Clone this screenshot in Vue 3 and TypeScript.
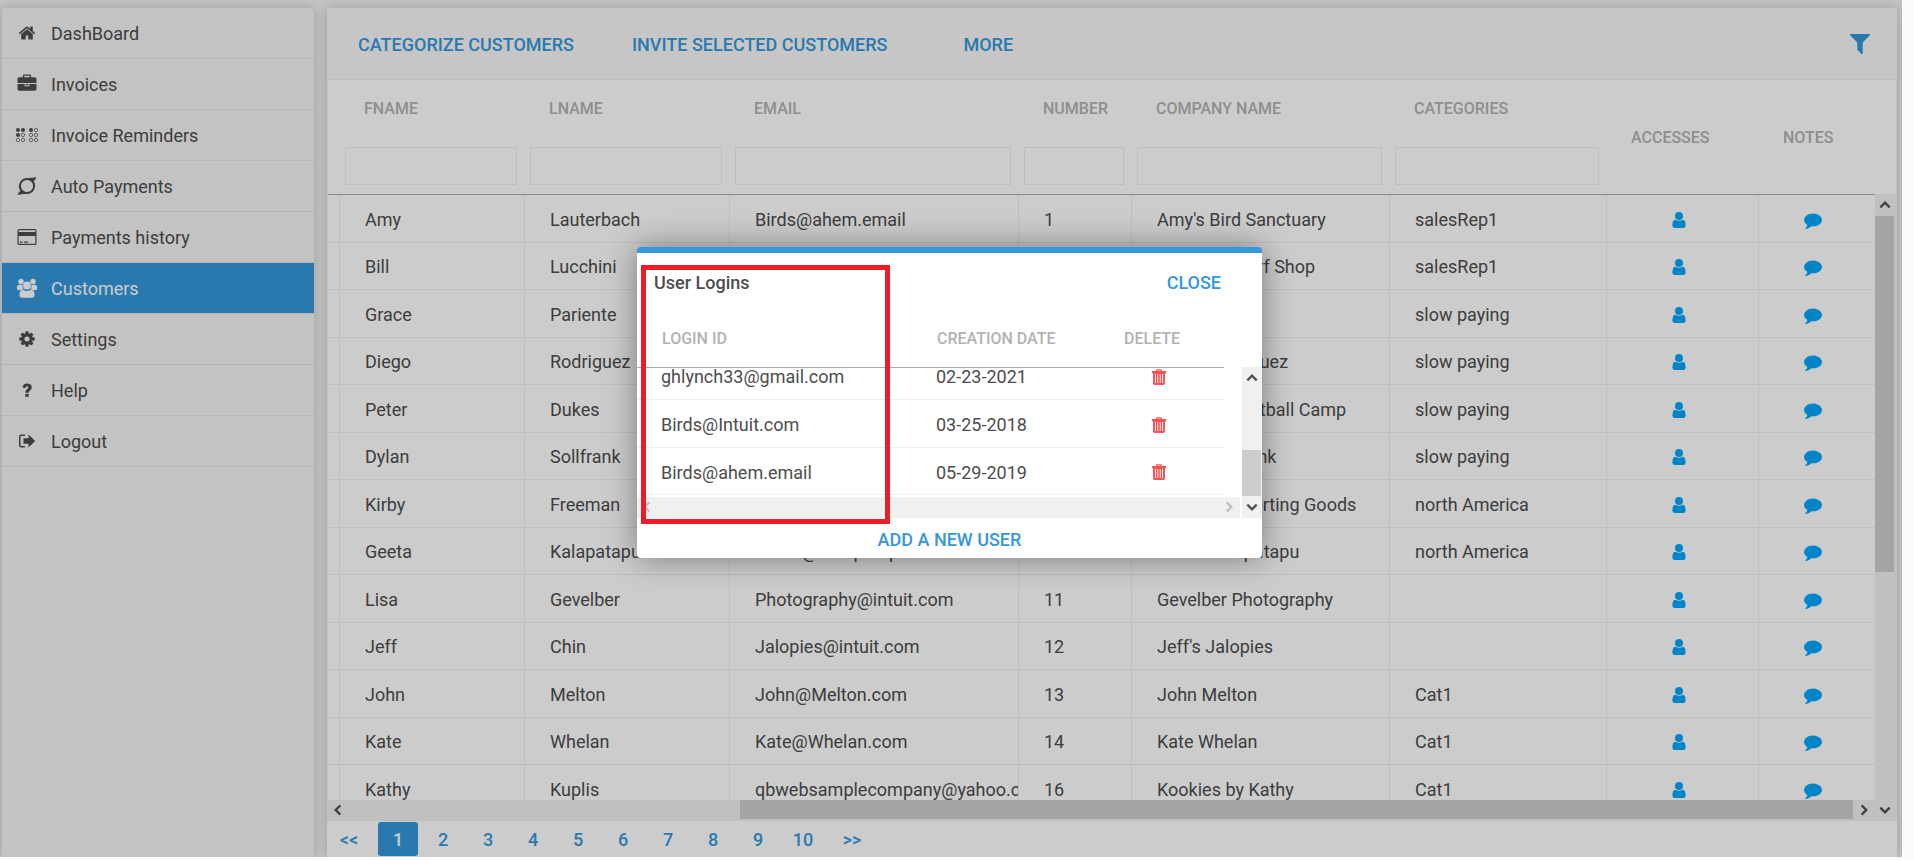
<script setup lang="ts">
import { onMounted, ref } from 'vue'

interface Customer {
  first: string
  last: string
  email: string
  number: string
  company: string
  category: string
}

const menu = [
  { icon: 'home', label: 'DashBoard' },
  { icon: 'briefcase', label: 'Invoices' },
  { icon: 'braille', label: 'Invoice Reminders' },
  { icon: 'cycle', label: 'Auto Payments' },
  { icon: 'card', label: 'Payments history' },
  { icon: 'group', label: 'Customers' },
  { icon: 'cog', label: 'Settings' },
  { icon: 'question', label: 'Help' },
  { icon: 'logout', label: 'Logout' },
]

const activeItem = ref('Customers')
const filterColumns = ['FNAME', 'LNAME', 'EMAIL', 'NUMBER', 'COMPANY NAME', 'CATEGORIES']

const customers: Customer[] = [
  { first: 'Amy', last: 'Lauterbach', email: 'Birds@ahem.email', number: '1', company: "Amy's Bird Sanctuary", category: 'salesRep1' },
  { first: 'Bill', last: 'Lucchini', email: 'Surf@Intuit.com', number: '2', company: "Bill's Windsurf Shop", category: 'salesRep1' },
  { first: 'Grace', last: 'Pariente', email: '', number: '3', company: '', category: 'slow paying' },
  { first: 'Diego', last: 'Rodriguez', email: 'Diego@Rodriguez.com', number: '4', company: 'Diego Rodriguez', category: 'slow paying' },
  { first: 'Peter', last: 'Dukes', email: 'Dukes_bball@intuit.com', number: '5', company: 'Dukes Basketball Camp', category: 'slow paying' },
  { first: 'Dylan', last: 'Sollfrank', email: '', number: '6', company: 'Dylan Sollfrank', category: 'slow paying' },
  { first: 'Kirby', last: 'Freeman', email: 'Sporting_goods@intuit.com', number: '8', company: 'Freeman Sporting Goods', category: 'north America' },
  { first: 'Geeta', last: 'Kalapatapu', email: 'Geeta@Kalapatapu.com', number: '10', company: 'Geeta Kalapatapu', category: 'north America' },
  { first: 'Lisa', last: 'Gevelber', email: 'Photography@intuit.com', number: '11', company: 'Gevelber Photography', category: '' },
  { first: 'Jeff', last: 'Chin', email: 'Jalopies@intuit.com', number: '12', company: "Jeff's Jalopies", category: '' },
  { first: 'John', last: 'Melton', email: 'John@Melton.com', number: '13', company: 'John Melton', category: 'Cat1' },
  { first: 'Kate', last: 'Whelan', email: 'Kate@Whelan.com', number: '14', company: 'Kate Whelan', category: 'Cat1' },
  { first: 'Kathy', last: 'Kuplis', email: 'qbwebsamplecompany@yahoo.com', number: '16', company: 'Kookies by Kathy', category: 'Cat1' },
]

const pages = ['<<', '1', '2', '3', '4', '5', '6', '7', '8', '9', '10', '>>']
const currentPage = ref('1')

const logins = [
  { id: 'ghlynch33@gmail.com', created: '02-23-2021' },
  { id: 'Birds@Intuit.com', created: '03-25-2018' },
  { id: 'Birds@ahem.email', created: '05-29-2019' },
]

const loginList = ref<HTMLElement | null>(null)

onMounted(() => {
  if (loginList.value) loginList.value.scrollTop = loginList.value.scrollHeight
})
</script>

<template>
  <div class="app">
    <svg class="sprite" aria-hidden="true">
      <symbol id="home" viewBox="0 0 1792 1792">
        <path d="M1472 992v480q0 26-19 45t-45 19h-384v-384h-256v384h-384q-26 0-45-19t-19-45v-480q0-1 .5-3t.5-3l575-474 575 474q1 2 1 6zm223-69l-62 74q-8 9-21 11h-3q-13 0-21-7l-692-577-692 577q-12 8-24 7-13-2-21-11l-62-74q-8-10-7-23.5t11-21.5l719-599q32-26 76-26t76 26l244 204v-195q0-14 9-23t23-9h192q14 0 23 9t9 23v408l219 182q10 8 11 21.5t-7 23.5z" />
      </symbol>
      <symbol id="briefcase" viewBox="-48 -48 1888 1888">
        <path d="M640 256h512v-128h-512v128zm1152 640v480q0 66-47 113t-113 47h-1472q-66 0-113-47t-47-113v-480h672v160q0 26 19 45t45 19h320q26 0 45-19t19-45v-160h672zm-768 0v128h-256v-128h256zm768-480v384h-1792v-384q0-66 47-113t113-47h352v-160q0-40 28-68t68-28h576q40 0 68 28t28 68v160h352q66 0 113 47t47 113z" />
      </symbol>
      <symbol id="braille" viewBox="0 0 24 20">
        <circle cx="3" cy="5" r="2" /><circle cx="8" cy="5" r="2" /><circle cx="16" cy="5" r="2" /><circle cx="3" cy="10" r="2" />
        <g fill="none" stroke="currentColor" stroke-width="0.7">
          <circle cx="21" cy="5" r="1.7" /><circle cx="8" cy="10" r="1.7" /><circle cx="16" cy="10" r="1.7" /><circle cx="21" cy="10" r="1.7" />
          <circle cx="3" cy="15" r="1.7" /><circle cx="8" cy="15" r="1.7" /><circle cx="16" cy="15" r="1.7" /><circle cx="21" cy="15" r="1.7" />
        </g>
      </symbol>
      <symbol id="cycle" viewBox="0 0 20 20">
        <path fill-rule="evenodd" d="M19.5 1Q18.500 4 16.600 5A8.300 8.300 0 0 1 10 18Q5 17.700 .5 19Q1.500 16 3.400 15A8.300 8.300 0 0 1 10 2Q15 2.300 19.500 1ZM10 3.900A6.100 6.100 0 1 0 10 16.100A6.100 6.100 0 1 0 10 3.900Z" />
      </symbol>
      <symbol id="card" viewBox="0 0 20 20">
        <path fill-rule="evenodd" d="M2 2H18Q19.500 2 19.500 3.500V17Q19.500 18 18 18H2Q.5 18 .5 17V3.500Q.5 2 2 2ZM1.700 3.200V5H18.300V3.200ZM1.700 9V16.800H18.300V9ZM3 14.500H5.500V15.700H3ZM7 14.500H11V15.700H7Z" />
      </symbol>
      <symbol id="group" viewBox="0 0 22 20">
        <circle cx="5" cy="3.500" r="2.700" /><circle cx="17" cy="3.500" r="2.700" />
        <path d="M3.500 6.500Q5.500 7.500 6.500 6.500Q6 9.500 7.500 11.300Q6 11.500 5 12.300H3Q.8 12.300.8 10Q.8 7 3.500 6.500ZM18.500 6.500Q16.500 7.500 15.500 6.500Q16 9.500 14.500 11.300Q16 11.500 17 12.300H19Q21.200 12.300 21.200 10Q21.200 7 18.500 6.500Z" />
        <circle cx="11" cy="7.500" r="3.900" />
        <path d="M7 11.700Q11 14.500 15 11.700Q18.500 12 18.500 17Q18.500 19.700 16 19.700H6Q3.500 19.700 3.500 17Q3.500 12 7 11.700Z" />
      </symbol>
      <symbol id="cog" viewBox="0 0 1792 1792">
        <path d="M1152 896q0-106-75-181t-181-75-181 75-75 181 75 181 181 75 181-75 75-181zm512-109v222q0 12-8 23t-20 13l-185 28q-19 54-39 91 35 50 107 138 10 12 10 25t-9 23q-27 37-99 108t-94 71q-12 0-26-9l-138-108q-44 23-91 38-16 136-29 186-7 28-36 28h-222q-14 0-24.500-8.500t-11.500-21.500l-28-184q-49-16-90-37l-141 107q-10 9-25 9-14 0-25-11-126-114-165-168-7-10-7-23 0-12 8-23 15-21 51-66.500t54-70.500q-27-50-41-99l-183-27q-13-2-21-12.500t-8-23.500v-222q0-12 8-23t19-13l186-28q14-46 39-92-40-57-107-138-10-12-10-24 0-10 9-23 26-36 98.500-107.500t94.500-71.500q13 0 26 10l138 107q44-23 91-38 16-136 29-186 7-28 36-28h222q14 0 24.500 8.500t11.500 21.500l28 184q49 16 90 37l142-107q9-9 24-9 13 0 25 10 129 119 165 170 7 8 7 22 0 12-8 23-15 21-51 66.500t-54 70.500q26 50 41 98l183 28q13 2 21 12.500t8 23.500z" />
      </symbol>
      <symbol id="question" viewBox="0 0 20 20">
        <path d="M5.500 7.500Q6 3.500 10 3.500Q14.800 3.500 14.800 7.500Q14.800 9.300 12.800 10.700Q11.700 11.500 11.700 12.800H8.300Q8.200 10.600 10 9.300Q11.400 8.300 11.300 7.600Q11.200 6.200 10 6.200Q8.700 6.200 8.300 8.300Z" />
        <rect x="8.300" y="13.800" width="3.400" height="3" />
      </symbol>
      <symbol id="logout" viewBox="0 0 20 20">
        <path d="M8 3.500V5H4.500Q3.500 5 3.500 6V14Q3.500 15 4.500 15H8V16.500H4.500Q2 16.500 2 14V6Q2 3.500 4.500 3.500Z" />
        <path d="M6.500 7.300H11.500V3.500L18.200 10L11.500 16.500V12.700H6.500Z" />
      </symbol>
      <symbol id="filter" viewBox="192 256 1408 1408">
        <path d="M1595 295q17 41-14 70l-493 493v742q0 42-39 59-13 5-25 5-27 0-45-19l-256-256q-19-19-19-45v-486l-493-493q-31-29-14-70 17-39 59-39h1280q42 0 59 39z" />
      </symbol>
      <symbol id="person" viewBox="0 0 14 16">
        <circle cx="7" cy="4" r="4" />
        <path d="M3 7.700Q7 10 11 7.700Q13.600 8.200 13.600 13.600Q13.600 16 11.600 16H2.400Q.4 16 .4 13.600Q.4 8.200 3 7.700Z" />
      </symbol>
      <symbol id="comment" viewBox="0 200 1792 1600">
        <path d="M1792 896q0 174-120 321.500t-326 233-450 85.500q-70 0-145-8-198 175-460 242-49 14-114 22-17 2-30.500-9t-17.500-29v-1q-3-4-.5-12t2-10 4.500-9.500l6-9 7-8.500 8-9q7-8 31-34.500t34.500-38 31-39.500 32.500-51 27-59 26-76q-157-89-247.500-220t-90.500-281q0-130 71-248.500t191-204.500 286-136.500 348-50.500q244 0 450 85.500t326 233 120 321.500z" />
      </symbol>
      <symbol id="trash" viewBox="0 0 14 16">
        <path fill-rule="evenodd" d="M4 2V1.500Q4 .3 5.200 .3H8.800Q10 .3 10 1.500V2H14V4.200H13V14.300Q13 16 11.300 16H2.700Q1 16 1 14.300V4.200H0V2ZM5.400 2H8.600V1.400H5.400ZM3 5V14H3.900V5ZM5.300 5V14H6.200V5ZM7.800 5V14H8.700V5ZM10.100 5V14H11V5Z" />
      </symbol>
      <symbol id="arrow-up" viewBox="0 0 12 12"><path class="chev" d="M2 8L6 4L10 8" /></symbol>
      <symbol id="arrow-down" viewBox="0 0 12 12"><path class="chev" d="M2 4L6 8L10 4" /></symbol>
      <symbol id="arrow-left" viewBox="0 0 12 12"><path class="chev" d="M8 2L4 6L8 10" /></symbol>
      <symbol id="arrow-right" viewBox="0 0 12 12"><path class="chev" d="M4 2L8 6L4 10" /></symbol>
    </svg>

    <div class="page">
      <nav class="sidebar">
        <a v-for="item in menu" :key="item.label" href="#" class="menu-item" :class="{ active: item.label === activeItem }" @click.prevent="activeItem = item.label">
          <svg class="menu-icon" :class="item.icon"><use :href="'#' + item.icon" /></svg>
          <span>{{ item.label }}</span>
        </a>
      </nav>

      <main class="panel">
        <div class="toolbar">
          <button type="button" class="link-button categorize">CATEGORIZE CUSTOMERS</button>
          <button type="button" class="link-button invite">INVITE SELECTED CUSTOMERS</button>
          <button type="button" class="link-button">MORE</button>
          <button type="button" class="filter-button" aria-label="Filter"><svg><use href="#filter" /></svg></button>
        </div>

        <div class="grid-area">
          <div class="list">
            <div class="viewport">
              <table class="customers">
                <colgroup>
                  <col class="c-edge" /><col class="c-first" /><col class="c-last" /><col class="c-email" /><col class="c-number" />
                  <col class="c-company" /><col class="c-category" /><col class="c-access" /><col class="c-notes" />
                </colgroup>
                <thead>
                  <tr>
                    <th class="edge"></th>
                    <th v-for="name in filterColumns" :key="name" class="filterable">
                      <label>
                        <span>{{ name }}</span>
                        <input type="text" />
                      </label>
                    </th>
                    <th class="plain">ACCESSES</th>
                    <th class="plain">NOTES</th>
                  </tr>
                </thead>
                <tbody>
                  <tr v-for="row in customers" :key="row.first">
                    <td class="edge"></td>
                    <td>{{ row.first }}</td>
                    <td>{{ row.last }}</td>
                    <td>{{ row.email }}</td>
                    <td>{{ row.number }}</td>
                    <td>{{ row.company }}</td>
                    <td>{{ row.category }}</td>
                    <td class="icon-cell">
                      <button type="button" class="icon-button" :aria-label="'Accesses of ' + row.first"><svg class="person"><use href="#person" /></svg></button>
                    </td>
                    <td class="icon-cell">
                      <button type="button" class="icon-button" :aria-label="'Notes of ' + row.first"><svg class="comment"><use href="#comment" /></svg></button>
                    </td>
                  </tr>
                </tbody>
              </table>
            </div>
            <div class="h-bar">
              <svg class="arrow"><use href="#arrow-left" /></svg>
              <div class="h-track"><div class="h-thumb"></div></div>
              <svg class="arrow"><use href="#arrow-right" /></svg>
            </div>
          </div>
          <div class="v-bar">
            <svg class="arrow"><use href="#arrow-up" /></svg>
            <div class="v-track"><div class="v-thumb"></div></div>
            <svg class="arrow"><use href="#arrow-down" /></svg>
          </div>
        </div>

        <div class="pager">
          <button v-for="p in pages" :key="p" type="button" :class="{ current: p === currentPage }" @click="currentPage = p">{{ p }}</button>
        </div>
      </main>

      <div class="overlay">
        <section class="dialog" role="dialog" aria-labelledby="dialog-title">
          <header class="dialog-head">
            <h2 id="dialog-title">User Logins</h2>
            <button type="button" class="link-button">CLOSE</button>
          </header>
          <div class="login-area">
            <div class="login-main">
              <div ref="loginList" class="login-list">
                <table class="logins">
                  <colgroup><col class="l-id" /><col class="l-date" /><col class="l-delete" /></colgroup>
                  <thead>
                    <tr><th>LOGIN ID</th><th>CREATION DATE</th><th>DELETE</th></tr>
                  </thead>
                  <tbody>
                    <tr v-for="login in logins" :key="login.id">
                      <td>{{ login.id }}</td>
                      <td>{{ login.created }}</td>
                      <td class="icon-cell">
                        <button type="button" class="icon-button" :aria-label="'Delete ' + login.id"><svg class="trash"><use href="#trash" /></svg></button>
                      </td>
                    </tr>
                  </tbody>
                </table>
              </div>
              <div class="h-bar inactive">
                <svg class="arrow"><use href="#arrow-left" /></svg>
                <svg class="arrow"><use href="#arrow-right" /></svg>
              </div>
            </div>
            <div class="v-bar small">
              <svg class="arrow"><use href="#arrow-up" /></svg>
              <div class="v-track"><div class="v-thumb"></div></div>
              <svg class="arrow"><use href="#arrow-down" /></svg>
            </div>
          </div>
          <footer class="dialog-foot">
            <button type="button" class="link-button">ADD A NEW USER</button>
          </footer>
          <div class="marker"></div>
        </section>
      </div>
    </div>
  </div>
</template>

<style>
body {
  margin: 0;
  background: #fcfcfc;
  overflow: hidden;
}
</style>

<style scoped>
.app {
  box-sizing: border-box;
  height: 100vh;
  padding: 0 12px 3px 0;
  font-family: Roboto, "Liberation Sans", sans-serif;
  font-size: 18px;
  line-height: 24px;
  color: #4d4d4d;
}
.sprite {
  position: absolute;
  width: 0;
  height: 0;
}
svg {
  display: block;
  fill: currentColor;
}
.chev {
  fill: none;
  stroke: currentColor;
  stroke-width: 2;
}
button {
  margin: 0;
  padding: 0;
  border: 0;
  background: none;
  font: inherit;
  color: inherit;
  cursor: pointer;
}
.page {
  position: relative;
  box-sizing: border-box;
  height: 100%;
  display: flex;
  gap: 13px;
  padding: 8px 5px 0 2px;
  background: #f4f4f4;
  overflow: hidden;
}
.sidebar {
  flex: none;
  width: 312px;
  border-radius: 3px 3px 0 0;
  background: #f4f4f4;
  box-shadow: 0 0 12px rgba(0, 0, 0, 0.2);
}
.menu-item {
  box-sizing: border-box;
  height: 51px;
  display: flex;
  align-items: center;
  gap: 12px;
  padding-left: 13px;
  border-bottom: 1px solid #e4e4e4;
  color: #4d4d4d;
  text-decoration: none;
}
.menu-item span {
  padding-top: 2px;
}
.menu-item.active {
  background: #3498db;
  color: #fff;
}
.menu-icon {
  width: 24px;
  height: 20px;
}
.menu-icon.home,
.menu-icon.cog {
  height: 18px;
}
.panel {
  flex: 1;
  min-width: 0;
  display: flex;
  flex-direction: column;
  border-radius: 3px 3px 0 0;
  background: #fff;
  box-shadow: 0 0 12px rgba(0, 0, 0, 0.2);
}
.toolbar {
  flex: none;
  box-sizing: border-box;
  height: 72px;
  display: flex;
  align-items: center;
  padding: 0 27px 0 31px;
  border-bottom: 1px solid #ebeef0;
  border-radius: 3px 3px 0 0;
  background: #f8f8f8;
}
.link-button {
  padding-top: 2px;
  font-weight: 500;
  color: #3498db;
}
.categorize {
  margin-right: 58px;
}
.invite {
  margin-right: 76px;
}
.filter-button {
  margin-left: auto;
  color: #3498db;
}
.filter-button svg {
  width: 20px;
  height: 20px;
}
.grid-area {
  flex: 1;
  min-height: 0;
  display: flex;
  border: 0 solid #ebf1f2;
  border-width: 0 1px;
}
.list {
  flex: 1;
  min-width: 0;
  display: flex;
  flex-direction: column;
}
.viewport {
  flex: 1;
  min-height: 0;
  overflow: hidden;
}
table {
  table-layout: fixed;
  border-spacing: 0;
}
.customers {
  width: 100%;
}
.c-edge { width: 11px; }
.c-first { width: 185px; }
.c-last { width: 205px; }
.c-email { width: 289px; }
.c-number { width: 113px; }
.c-company { width: 258px; }
.c-category { width: 217px; }
.c-access { width: 152px; }
.c-notes { width: 117px; }
th {
  box-sizing: border-box;
  border-bottom: 1px solid #acacac;
  font-size: 16px;
  font-weight: 500;
  text-align: left;
  color: #b2b2b2;
  background: #fff;
}
.customers th {
  height: 115px;
  padding: 0;
}
.filterable label {
  display: flex;
  flex-direction: column;
  gap: 26px;
  padding: 7px 7px 0 6px;
}
.filterable span {
  padding-left: 19px;
}
.filterable input {
  box-sizing: border-box;
  width: 100%;
  height: 38px;
  border: 1px solid #ebf1f2;
  background: none;
  font: inherit;
}
.customers th.plain {
  padding: 2px 0 0 25px;
}
td {
  box-sizing: border-box;
  height: 48px;
  padding: 2px 0 0 25px;
  border-bottom: 1px solid #ebf1f2;
  overflow: hidden;
  white-space: nowrap;
}
.customers td {
  border-left: 1px solid #ebf1f2;
}
.customers td.edge {
  padding: 0;
  border-left: 0;
}
.customers tr:nth-child(even) td {
  height: 47px;
}
td.icon-cell {
  padding: 2px 6px 0 0;
}
.customers td.icon-cell {
  padding: 2px 8px 0 0;
}
.customers td.icon-cell:last-child {
  padding: 4px 8px 0 0;
}
.icon-button {
  display: block;
  margin: 0 auto;
}
.person {
  width: 14px;
  height: 16px;
  color: #00a8fb;
}
.comment {
  width: 18px;
  height: 16px;
  color: #00a8fb;
}
.trash {
  width: 14px;
  height: 16px;
  color: #ff5252;
}
.arrow {
  flex: none;
  width: 14px;
  height: 14px;
  color: #505050;
}
.h-bar {
  flex: none;
  box-sizing: border-box;
  height: 21px;
  display: flex;
  align-items: center;
  gap: 4px;
  padding: 0 4px 2px 3px;
  background: #f0f0f0;
}
.h-track {
  flex: 1;
  height: 19px;
}
.h-thumb {
  width: 74%;
  height: 100%;
  margin-left: auto;
  background: #cdcdcd;
}
.v-bar {
  flex: none;
  box-sizing: border-box;
  width: 21px;
  display: flex;
  flex-direction: column;
  align-items: center;
  gap: 4px;
  margin-top: 114px;
  padding: 4px 2px 4px 0;
  background: #f0f0f0;
}
.v-track {
  flex: 1;
  width: 19px;
}
.v-thumb {
  height: 61%;
  background: #cdcdcd;
}
.pager {
  flex: none;
  display: flex;
  gap: 5px;
  padding: 1px 2px;
}
.pager button {
  width: 40px;
  height: 34px;
  padding-top: 2px;
  border-radius: 3px;
  font-weight: 500;
  color: #3498db;
}
.pager button:first-child {
  margin-right: 4px;
}
.pager button:last-child {
  margin-left: 4px;
}
.pager button.current {
  background: #3498db;
  color: #fff;
}
.overlay {
  position: absolute;
  inset: 0;
  display: flex;
  justify-content: center;
  align-items: flex-start;
  padding: 247px 3px 0 0;
  background: rgba(0, 0, 0, 0.2);
}
.dialog {
  position: relative;
  box-sizing: border-box;
  width: 625px;
  border-top: 6px solid #3498db;
  border-radius: 4px;
  background: #fff;
  box-shadow: 0 0 32px rgba(0, 0, 0, 0.4);
}
.dialog-head {
  height: 58px;
  display: flex;
  align-items: center;
  justify-content: space-between;
  padding: 0 41px 0 17px;
}
.dialog-head h2 {
  margin: 0;
  padding-top: 2px;
  font-size: 18px;
  font-weight: 500;
}
.login-area {
  display: flex;
  gap: 2px;
}
.login-main {
  flex: 1;
  min-width: 0;
}
.login-list {
  height: 186px;
  overflow: hidden;
}
.logins {
  width: 587px;
  padding-bottom: 2px;
}
.l-id { width: 275px; }
.l-date { width: 187px; }
.l-delete { width: 125px; }
.logins th {
  position: sticky;
  top: 0;
  height: 57px;
  padding: 0 0 0 25px;
}
.logins td {
  padding-top: 3px;
  padding-left: 24px;
}
.logins tr:last-child td {
  height: 47px;
}
.logins td.icon-cell {
  padding-top: 2px;
  padding-left: 0;
}
.h-bar.inactive {
  justify-content: space-between;
  padding: 0 4px 2px 3px;
}
.h-bar.inactive .arrow {
  color: #bfbfbf;
}
.v-bar.small {
  width: 20px;
  margin-top: 56px;
  padding: 4px 1px 4px 0;
}
.small .v-track {
  display: flex;
  align-items: flex-end;
}
.small .v-thumb {
  width: 19px;
  height: 43%;
}
.dialog-foot {
  height: 32px;
  display: flex;
  justify-content: center;
  align-items: flex-start;
  padding-top: 8px;
}
.marker {
  position: absolute;
  top: 12px;
  left: 4px;
  box-sizing: border-box;
  width: 249px;
  height: 259px;
  border: 5px solid #ee1c24;
  pointer-events: none;
}
</style>
